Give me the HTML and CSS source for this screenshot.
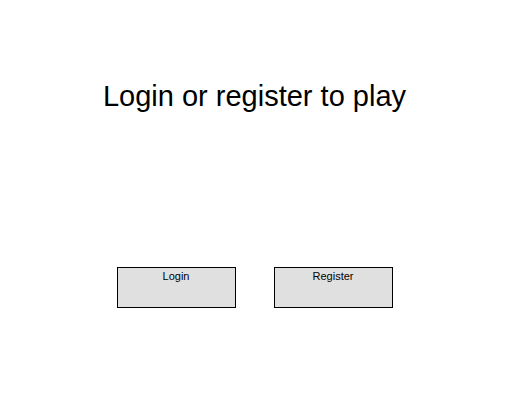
FILE: index.html
```html
<!DOCTYPE html>
<html lang="en">
<head>
  <meta charset="UTF-8" />
  <title>Play</title>
  <link rel="stylesheet" href="styles.css">
</head>
<body>
  <div class="gate">
    <h1 class="gate-title">Login or register to play</h1>
    <div class="gate-actions">
      <button class="gate-btn">Login</button>
      <button class="gate-btn">Register</button>
    </div>
  </div>
</body>
</html>
```
FILE: styles.css
```css
body {
  margin: 0;
  font-family: "Liberation Sans", Arial, sans-serif;
  background-color: #fff;
  color: #000;
}
.gate {
  padding: 80px 7px 0 0;
  text-align: center;
}
.gate-title {
  margin: 0;
  font-size: 29px;
  font-weight: normal;
  line-height: 32px;
}
.gate-actions {
  display: flex;
  justify-content: center;
  gap: 38px;
  margin-top: 155px;
}
.gate-btn {
  width: 119px;
  height: 41px;
  padding: 2px 0 0;
  border: 1px solid #000;
  background-color: #e0e0e0;
  font-family: "Liberation Sans", Arial, sans-serif;
  font-size: 11px;
  color: #000;
  display: flex;
  justify-content: center;
  align-items: flex-start;
}
```
